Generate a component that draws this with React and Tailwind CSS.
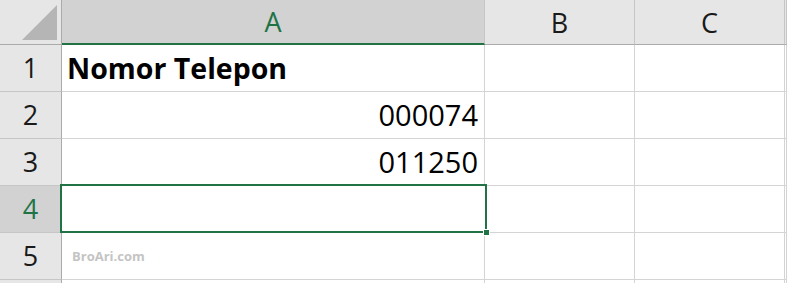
import React from "react";

const font = { fontFamily: '"Open Sans", "Liberation Sans", sans-serif' };

function Corner() {
  return (
    <div className="relative bg-[#e6e6e6] border-r border-b border-[#ababab]">
      <svg className="absolute left-0 top-0" width="61" height="44" viewBox="0 0 61 44">
        <polygon points="22,40 57,40 57,5" fill="#b5b5b5" />
      </svg>
    </div>
  );
}

function ColHead({ label, selected }) {
  return (
    <div
      className={
        selected
          ? "flex items-center justify-center bg-[#d2d2d2] border-r border-[#c6c6c6] border-b-2 border-b-[#217346] text-[#217346] text-[27px] pt-[2px]"
          : "flex items-center justify-center bg-[#e6e6e6] border-r border-[#c6c6c6] border-b border-b-[#ababab] text-[#1a1a1a] text-[27px] pt-[2px]"
      }
    >
      {label}
    </div>
  );
}

function RowHead({ n, selected }) {
  return (
    <div
      className={
        selected
          ? "flex items-center justify-center bg-[#d2d2d2] border-r border-r-[#ababab] border-b border-b-[#c6c6c6] text-[#217346] text-[27px]"
          : "flex items-center justify-center bg-[#e6e6e6] border-r border-r-[#ababab] border-b border-b-[#c6c6c6] text-[#1a1a1a] text-[27px]"
      }
    >
      {n}
    </div>
  );
}

function Cell({ children, className = "" }) {
  return (
    <div className={"flex items-center border-r border-b border-[#d4d4d4] bg-white " + className}>
      {children}
    </div>
  );
}

export default function App() {
  return (
    <div className="w-[787px] h-[283px] overflow-hidden bg-white" style={font}>
      <div className="grid grid-cols-[62px_423px_150px_150px_1fr] grid-rows-[45px_47px_47px_47px_47px_47px_10px]">
        <Corner />
        <ColHead label="A" selected />
        <ColHead label="B" />
        <ColHead label="C" />
        <ColHead label="" />

        <RowHead n="1" />
        <Cell className="pl-[5px]">
          <span className="font-bold text-[28.5px] text-black">Nomor Telepon</span>
        </Cell>
        <Cell />
        <Cell />
        <Cell />

        <RowHead n="2" />
        <Cell className="justify-end pr-[6px]">
          <span className="text-[29px] text-black">000074</span>
        </Cell>
        <Cell />
        <Cell />
        <Cell />

        <RowHead n="3" />
        <Cell className="justify-end pr-[6px]">
          <span className="text-[29px] text-black">011250</span>
        </Cell>
        <Cell />
        <Cell />
        <Cell />

        <RowHead n="4" selected />
        <div className="relative bg-white border-b border-[#d4d4d4]">
          <div className="absolute left-[-2px] top-[-2px] right-[-2px] bottom-[-1px] border-2 border-[#217346]" />
          <div className="absolute right-[-5px] bottom-[-4px] w-[7px] h-[7px] bg-[#217346] border border-white" />
        </div>
        <Cell />
        <Cell />
        <Cell />

        <RowHead n="5" />
        <Cell className="pl-[10px] pt-[2px]">
          <span className="font-bold text-[13px] text-[#c4c4c4]">BroAri.com</span>
        </Cell>
        <Cell />
        <Cell />
        <Cell />

        <RowHead n="" />
        <Cell />
        <Cell />
        <Cell />
        <Cell />
      </div>
    </div>
  );
}
